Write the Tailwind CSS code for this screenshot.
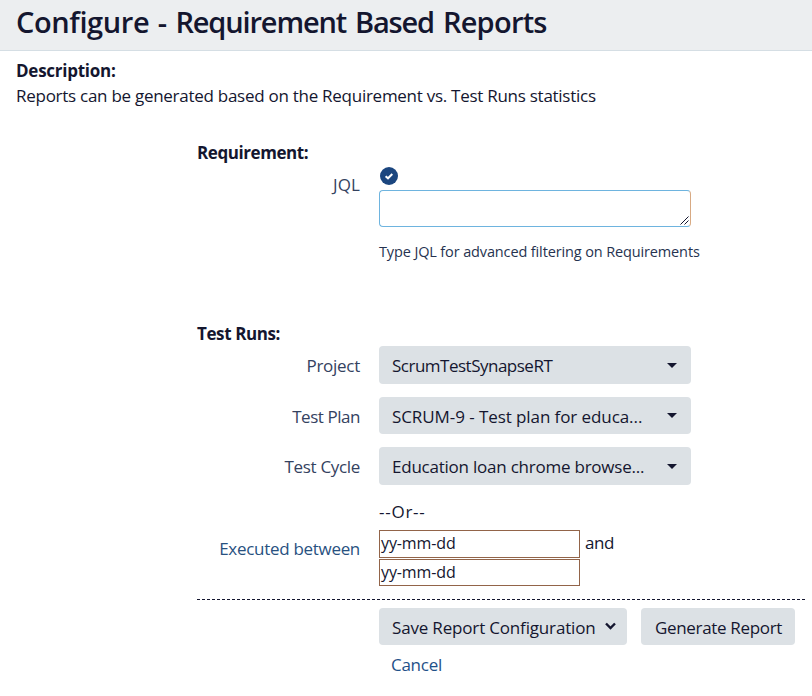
<!DOCTYPE html>
<html lang="en">
<head>
<meta charset="utf-8">
<title>Configure - Requirement Based Reports</title>
<script src="https://cdn.jsdelivr.net/npm/@tailwindcss/browser@4"></script>
</head>
<body class="w-[812px] h-[696px] overflow-hidden bg-white text-[#172b4d] font-['Open_Sans','Noto_Sans',sans-serif] text-[17px] leading-[24px] whitespace-nowrap">
<header class="h-[51px] bg-[#eceef0] border-b border-[#d5dee4] pl-4">
  <h1 class="text-[29px] leading-[44px] font-semibold text-[#14162f]"><span class="tracking-[-0.4px] [word-spacing:1.5px]">Configure - </span><span class="tracking-[-1.15px] [word-spacing:2.5px]">Requirement Based </span><span class="tracking-[-0.75px]">Reports</span></h1>
</header>
<section class="pl-4 pt-2 h-[90px] text-[#14162f]">
  <h2 class="font-bold leading-[24px]"><span class="tracking-[-0.25px]">Description:</span></h2>
  <p class="leading-[25px]"><span class="tracking-[-0.27px]">Reports can be generated based on the Requirement vs. Test Runs statistics</span></p>
</section>
<form class="pl-[197px] text-[#14162f]">
  <section class="h-[181px]">
    <h2 class="font-bold"><span class="tracking-[-0.42px]">Requirement:</span></h2>
    <div class="flex">
      <label class="w-[163px] pt-[8px] text-right text-[#34425f]"><span class="tracking-[0.1px]">JQL</span></label>
      <div class="ml-[19px]">
        <svg class="block mt-[2px] ml-px w-[18px] h-[18px]" viewBox="0 0 18 18"><circle cx="9" cy="9" r="9" fill="#1b467f"/><path d="M5.6 9.2 8 11.3 12.3 7" fill="none" stroke="#fff" stroke-width="2"/></svg>
        <div class="relative mt-[5px] w-[312px] h-[37px] rounded-[4px] border border-[#6eb4df] border-r-[#d8aa83]">
          <svg class="absolute right-px bottom-px w-[9px] h-[9px]" viewBox="0 0 9 9"><path d="M.5 8.5 8.5 .5M4.5 8.5 8.5 4.5" stroke="#14162f" stroke-width="1"/></svg>
        </div>
        <p class="mt-[13px] text-[14.5px] leading-[24px] text-[#263350]"><span class="tracking-[-0.13px]">Type JQL for advanced filtering on Requirements</span></p>
      </div>
    </div>
  </section>
  <section class="h-[277px]">
    <h2 class="font-bold"><span class="tracking-[-0.4px]">Test Runs:</span></h2>
    <div class="flex">
      <label class="w-[163px] pt-[8px] text-right text-[#34425f]"><span class="tracking-[-0.27px]">Project</span></label>
      <div class="ml-[19px] w-[312px] h-[38px] rounded-[4px] bg-[#dce1e5] flex items-center justify-between pl-[13px] pr-[14px]"><span class="pt-px tracking-[-0.5px]">ScrumTestSynapseRT</span><svg class="w-[10px] h-[5px]" viewBox="0 0 10 5"><path d="M0 0H10L5 5Z" fill="#14162f"/></svg></div>
    </div>
    <div class="flex mt-[13px]">
      <label class="w-[163px] pt-[8px] text-right text-[#34425f]"><span class="tracking-[-0.45px]">Test Plan</span></label>
      <div class="ml-[19px] w-[312px] h-[37px] rounded-[4px] bg-[#dce1e5] flex items-center justify-between pl-[13px] pr-[14px]"><span class="pt-[2px] tracking-[-0.08px]">SCRUM-9 - Test plan for educa...</span><svg class="w-[10px] h-[5px]" viewBox="0 0 10 5"><path d="M0 0H10L5 5Z" fill="#14162f"/></svg></div>
    </div>
    <div class="flex mt-[13px]">
      <label class="w-[163px] pt-[8px] text-right text-[#34425f]"><span class="tracking-[-0.32px]">Test Cycle</span></label>
      <div class="ml-[19px] w-[312px] h-[38px] rounded-[4px] bg-[#dce1e5] flex items-center justify-between pl-[13px] pr-[14px]"><span class="pt-px tracking-[-0.23px]">Education loan chrome browse...</span><svg class="w-[10px] h-[5px]" viewBox="0 0 10 5"><path d="M0 0H10L5 5Z" fill="#14162f"/></svg></div>
    </div>
    <div class="flex mt-[15px]">
      <label class="w-[163px] pt-[37px] text-right text-[#28517f]"><span class="tracking-[-0.3px]">Executed between</span></label>
      <div class="ml-[19px]">
        <p class="h-[30px]"><span class="tracking-[0.75px]">--Or--</span></p>
        <div class="flex">
          <div class="w-[201px] h-[28px] border border-[#926449] pl-px leading-[25px] text-[16px]"><span class="tracking-[-0.12px]">yy-mm-dd</span></div>
          <span class="ml-[5px] leading-[26px] tracking-[-0.4px]">and</span>
        </div>
        <div class="mt-px w-[201px] h-[27px] border border-[#926449] pl-px leading-[25px] text-[16px]"><span class="tracking-[-0.12px]">yy-mm-dd</span></div>
      </div>
    </div>
  </section>
  <footer>
    <svg class="block w-[615px] h-px" viewBox="0 0 615 1"><path d="M0 .5H609" stroke="#14162f" stroke-dasharray="3 2"/></svg>
    <div class="flex mt-[8px] ml-[182px] gap-[14px]">
      <button type="button" class="w-[248px] h-[37px] rounded-[4px] bg-[#dce1e5] flex items-center pl-[13px] pt-[2px]"><span class="w-[204px] tracking-[-0.17px] text-left">Save Report Configuration</span><svg class="ml-[9px] w-[11px] h-[8px] -mt-1" viewBox="0 0 11 8"><path d="M1 1.5 5.5 6 10 1.5" fill="none" stroke="#14162f" stroke-width="2.4"/></svg></button>
      <button type="button" class="w-[154px] h-[37px] rounded-[4px] bg-[#dce1e5] flex items-center pl-[14px] pt-[2px]"><span class="tracking-[-0.33px]">Generate Report</span></button>
    </div>
    <a class="block ml-[194px] mt-[8px] text-[#1f5189]"><span class="tracking-[-0.27px]">Cancel</span></a>
  </footer>
</form>
</body>
</html>
